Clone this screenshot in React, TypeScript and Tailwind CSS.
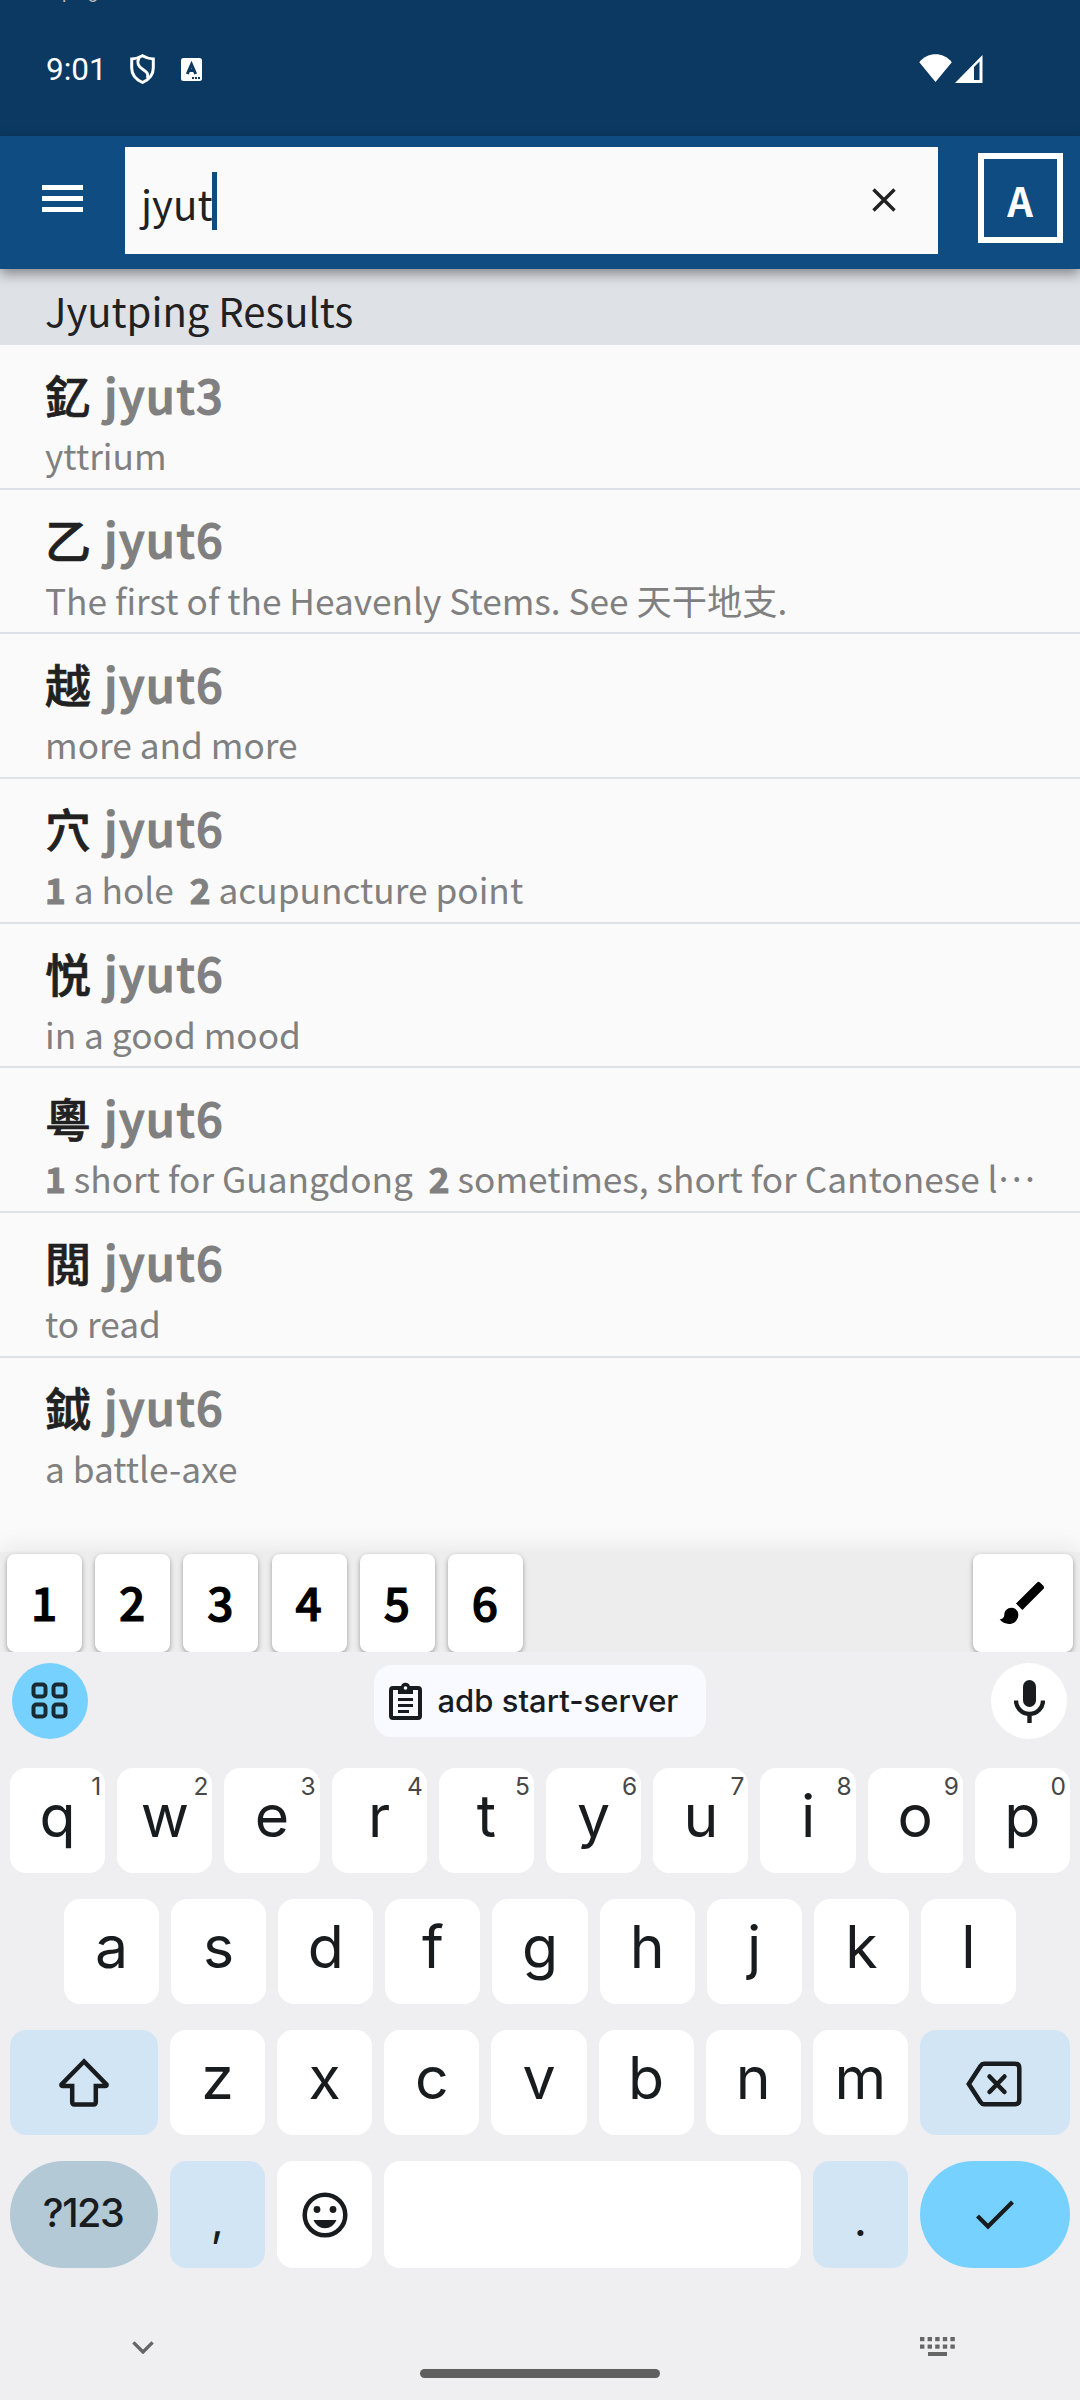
import React from "react";

const CJK = "font-['Noto_Sans_CJK_TC','Noto_Sans_CJK_SC',sans-serif]";
const SANS = "font-[Inter,sans-serif]";

type Sense = { n?: string; text: string; clipped?: boolean };
type Entry = { han: string; jp: string; senses: Sense[] };

const entries: Entry[] = [
  { han: "釔", jp: "jyut3", senses: [{ text: "yttrium" }] },
  { han: "乙", jp: "jyut6", senses: [{ text: "The first of the Heavenly Stems. See 天干地支." }] },
  { han: "越", jp: "jyut6", senses: [{ text: "more and more" }] },
  { han: "穴", jp: "jyut6", senses: [{ n: "1", text: "a hole" }, { n: "2", text: "acupuncture point" }] },
  { han: "悦", jp: "jyut6", senses: [{ text: "in a good mood" }] },
  {
    han: "粵",
    jp: "jyut6",
    senses: [
      { n: "1", text: "short for Guangdong" },
      { n: "2", text: "sometimes, short for Cantonese l", clipped: true },
    ],
  },
  { han: "閲", jp: "jyut6", senses: [{ text: "to read" }] },
  { han: "鉞", jp: "jyut6", senses: [{ text: "a battle-axe" }] },
];

function StatusBar() {
  return (
    <div className="relative flex h-[136px] shrink-0 items-start overflow-hidden bg-[#0c3961] text-white">
      <span className="absolute left-[62px] top-[-18px] font-[Roboto,sans-serif] text-[19px] leading-[20px] text-[#b8b8b8]">
        ping
      </span>
      <div className="ml-[46px] mt-[51px] w-[84px] font-[Roboto,sans-serif] text-[31.5px] leading-[38px]">9:01</div>
      <svg className="mt-[54px] h-[30px] w-[25px]" viewBox="0 0 25 30" fill="none" stroke="white" strokeWidth="3">
        <path d="M12.5 1.7 C9 3.8 5 4.8 1.7 5 V14 C1.7 21 7 26 12.5 28.5 C18 26 23.3 21 23.3 14 V5 C20 4.8 16 3.8 12.5 1.7Z" />
        <path d="M9 3.5 C6 10 9 13 13 15.5 C17 18 18.5 19.5 17.5 24" />
      </svg>
      <svg className="ml-[26px] mt-[58px] h-[23px] w-[21px]" viewBox="0 0 21 23">
        <rect width="21" height="23" rx="2.5" fill="white" />
        <path d="M6.3 16 L10.5 6.5 L14.7 16 M8 12.6 H13" fill="none" stroke="#0c3961" strokeWidth="3" />
        <path d="M11 19h2v2h-2z M14 19h2v2h-2z M17 19h2v2h-2z" fill="#0c3961" />
      </svg>
      <svg className="ml-[717px] mt-[54px] h-[29px] w-[64px]" viewBox="0 0 64 29" fill="white">
        <path d="M16.5 28 L0.3 8.2 C9 -2.3 24 -2.3 32.8 8.2Z" />
        <path fillRule="evenodd" d="M63.500 1 V29 H36Z M55 13 V26 H60.500 V7.500Z" />
      </svg>
    </div>
  );
}

function AppBar() {
  return (
    <div className="relative z-10 flex h-[133px] shrink-0 items-start bg-[#0f4c81] shadow-[0_5px_12px_rgba(0,0,0,0.4)]">
      <div className="ml-[42px] mt-[49px] flex w-[41px] flex-col gap-[6px]">
        <div className="h-[5px] bg-white" />
        <div className="h-[5px] bg-white" />
        <div className="h-[5px] bg-white" />
      </div>
      <div className="ml-[42px] mt-[11px] flex h-[107px] w-[813px] items-start bg-[#fafafa]">
        <span className={`${CJK} ml-[16px] mt-[26px] w-[71px] text-[40.2px] leading-[60px] text-[#212121]`}>jyut</span>
        <div className="mt-[25px] h-[58px] w-[5px] bg-[#0f4c81]" />
        <svg className="ml-auto mr-[42px] mt-[41px] h-[24px] w-[24px]" viewBox="0 0 24 24">
          <path d="M1.5 1.5 L22.5 22.5 M22.5 1.5 L1.5 22.5" stroke="#212121" strokeWidth="3.4" />
        </svg>
      </div>
      <div
        className={`${CJK} ml-[39.5px] mt-[17px] flex h-[90px] w-[85px] justify-center border-[6px] border-white pt-[9px] text-[40px] font-bold leading-[64px] text-white`}
      >
        A
      </div>
    </div>
  );
}

function Row({ entry, last }: { entry: Entry; last: boolean }) {
  return (
    <div
      className={`flex h-[144.67px] shrink-0 flex-col px-[45px] pt-[18.5px] ${last ? "" : "border-b-2 border-[#dee2e6]"}`}
    >
      <div className="flex gap-[13px] font-medium leading-[60px]">
        <span className="w-[46px] text-[46px] text-[#212121] [-webkit-text-stroke:0.7px_#212121]">{entry.han}</span>
        <span className="text-[47px] tracking-[1.3px] text-[#808080] [-webkit-text-stroke:1.2px_#808080]">{entry.jp}</span>
      </div>
      <div className="mt-[6.5px] whitespace-nowrap text-[35.25px] leading-[50px] text-[#808080]">
        {entry.senses.map((s, i) => (
          <React.Fragment key={i}>
            {i > 0 && "\u00a0 "}
            {s.n && <b className="font-bold [-webkit-text-stroke:1px_#808080]">{s.n} </b>}
            {s.text}
            {s.clipped && <span className="relative top-[-11px]">…</span>}
          </React.Fragment>
        ))}
      </div>
    </div>
  );
}

function ToneBar() {
  return (
    <div className="relative flex h-[100px] shrink-0 items-start justify-between bg-[#ededed] pl-[7px] pr-[7px] pt-[2px] shadow-[0_-4px_22px_rgba(0,0,0,0.08)]">
      <div className="flex gap-[13.2px]">
        {["1", "2", "3", "4", "5", "6"].map((n) => (
          <div
            key={n}
            className={`${CJK} h-[98px] w-[75px] rounded-[8px] bg-white pr-[1px] pt-[5px] text-center text-[46px] font-medium leading-[84px] text-black shadow-[0_2px_5px_rgba(0,0,0,0.35)] [-webkit-text-stroke:1.2px_black]`}
          >
            {n}
          </div>
        ))}
      </div>
      <div className="flex h-[98px] w-[100px] items-center justify-center rounded-[8px] bg-white shadow-[0_2px_5px_rgba(0,0,0,0.35)]">
        <svg className="h-[56px] w-[56px]" viewBox="0 0 24 24" fill="black">
          <path d="M7 14c-1.66 0-3 1.34-3 3 0 1.31-1.16 2-2 2 .92 1.22 2.49 2 4 2 2.21 0 4-1.79 4-4 0-1.66-1.34-3-3-3zm13.71-9.37l-1.34-1.34a.9959.9959 0 0 0-1.41 0L9 12.25 11.75 15l8.96-8.96c.39-.39.39-1.02 0-1.41z" />
        </svg>
      </div>
    </div>
  );
}

function Key({ label, hint }: { label: string; hint?: string }) {
  return (
    <div className="relative h-[105px] flex-1 rounded-[16px] bg-white text-center text-[59px] leading-[95px] text-[#191c1e]">
      {label}
      {hint && (
        <span className="absolute right-[4px] top-[3px] text-[24.500px] leading-[30px] text-[#474747]">{hint}</span>
      )}
    </div>
  );
}

function Keyboard() {
  return (
    <div className={`${SANS} relative flex h-[748px] shrink-0 flex-col bg-[#efeff2] text-[#191c1e]`}>
      <div className="mt-[11px] flex h-[76px] items-center justify-between pl-[12px] pr-[13px]">
        <div className="flex size-[76px] items-center justify-center rounded-full bg-[#77d1ff] pb-[1px] pr-[1px]">
          <svg className="h-[37px] w-[37px]" viewBox="0 0 37 37" fill="none" stroke="#1a2a33" strokeWidth="4">
            <rect x="2.5" y="2.5" width="12" height="12" rx="3" />
            <rect x="22.5" y="2.5" width="12" height="12" rx="3" />
            <rect x="2.5" y="22.5" width="12" height="12" rx="3" />
            <rect x="22.5" y="22.5" width="12" height="12" rx="3" />
          </svg>
        </div>
        <div className="flex h-[72px] w-[332px] items-center rounded-[18px] bg-[#f8faff] pl-[15px]">
          <svg className="h-[38px] w-[33px]" viewBox="0 0 33 38" fill="none">
            <rect x="2" y="6" width="29" height="30" rx="2" stroke="#191c1e" strokeWidth="4" />
            <path d="M9 4.5h3a4.6 4.6 0 0 1 9 0h3V12H9z" fill="#191c1e" />
            <circle cx="16.5" cy="6" r="1.8" fill="white" />
            <path d="M9 17.5h15M9 23.5h15M9 29.5h11" stroke="#191c1e" strokeWidth="3" />
          </svg>
          <span className="ml-[16px] whitespace-nowrap text-[31px] font-[450] leading-[44px]">adb start-server</span>
        </div>
        <div className="flex size-[76px] items-center justify-center rounded-full bg-white">
          <svg className="h-[43px] w-[31px]" viewBox="0 0 31 43" fill="none">
            <rect x="9" y="0" width="13" height="27" rx="6.5" fill="#191c1e" />
            <path d="M2 20.5a13.5 13.5 0 0 0 27 0M15.500 34v9" stroke="#191c1e" strokeWidth="4.400" />
          </svg>
        </div>
      </div>

      <div className="mt-[29px] flex flex-col gap-[26px] px-[10px]">
        <div className="flex gap-[12px]">
          {"qwertyuiop".split("").map((c, i) => (
            <Key key={c} label={c} hint={String((i + 1) % 10)} />
          ))}
        </div>
        <div className="flex gap-[12px] px-[54px]">
          {"asdfghjkl".split("").map((c) => (
            <Key key={c} label={c} />
          ))}
        </div>
        <div className="flex gap-[12px]">
          <div className="flex h-[105px] w-[148px] items-center justify-center rounded-[16px] bg-[#d2e5f5]">
            <svg className="h-[50px] w-[50px]" viewBox="0 0 50 50" fill="none">
              <path
                d="M25 3.500 L2.500 26.500 Q2 28 4 28 H13.200 V44 Q13.200 46.500 15.500 46.500 H34.500 Q36.800 46.500 36.800 44 V28 H46 Q48 28 47.500 26.500Z"
                stroke="#191c1e"
                strokeWidth="4.500"
              />
            </svg>
          </div>
          {"zxcvbnm".split("").map((c) => (
            <Key key={c} label={c} />
          ))}
          <div className="flex h-[105px] w-[150px] items-center justify-center rounded-[16px] bg-[#d2e5f5] pr-[1px]">
            <svg className="mt-[3px] h-[46px] w-[56px]" viewBox="0 0 56 46" fill="none" stroke="#191c1e" strokeWidth="4.500">
              <path d="M2.800 23 L14.500 5 Q16 2.800 18 2.800 H49 Q53.300 2.800 53.300 7 V39 Q53.300 43.200 49 43.200 H18 Q16 43.200 14.500 41Z" />
              <path d="M23.500 15.500 L38.500 31 M38.500 15.500 L23.500 31" strokeLinecap="round" />
            </svg>
          </div>
        </div>
        <div className="flex gap-[12px]">
          <div className="h-[107px] w-[148px] rounded-[54px] bg-[#b4c9d6] pr-[2px] text-center text-[39.5px] font-[450] leading-[104px] tracking-[-1.500px]">
            ?123
          </div>
          <div className="h-[107px] w-[95px] rounded-[16px] bg-[#d2e5f5] text-center text-[46px] leading-[116px]">,</div>
          <div className="flex h-[107px] w-[95px] items-center justify-center rounded-[16px] bg-white">
            <svg className="h-[46px] w-[46px]" viewBox="0 0 46 46">
              <circle cx="23" cy="23" r="20.300" fill="none" stroke="#191c1e" strokeWidth="4.500" />
              <circle cx="15" cy="17.500" r="3.400" fill="#191c1e" />
              <circle cx="31" cy="17.500" r="3.400" fill="#191c1e" />
              <path d="M11.500 28h23a12.200 12.200 0 0 1-23 0z" fill="#191c1e" />
            </svg>
          </div>
          <div className="h-[107px] flex-1 rounded-[16px] bg-white" />
          <div className="h-[107px] w-[95px] rounded-[16px] bg-[#d2e5f5] text-center text-[46px] leading-[116px]">.</div>
          <div className="flex h-[107px] w-[150px] items-center justify-center rounded-[54px] bg-[#77d1ff]">
            <svg className="h-[30px] w-[40px]" viewBox="0 0 40 30" fill="none">
              <path d="M2.500 16 L13 26.500 L37.500 2" stroke="#191c1e" strokeWidth="4.200" />
            </svg>
          </div>
        </div>
      </div>

      <div className="mt-[69px] flex h-[20px] items-start pl-[132px] pr-[125px]">
        <svg className="mt-[4px] h-[13px] w-[22px]" viewBox="0 0 22 13" fill="none">
          <path d="M1.400 1.400 L11 11 L20.600 1.400" stroke="#666" strokeWidth="3.400" />
        </svg>
        <svg className="ml-auto h-[20px] w-[35px]" viewBox="0 0 35 20" fill="#666">
          {[0, 7.6, 15.2, 22.8, 30.4].map((x) => (
            <React.Fragment key={x}>
              <rect x={x} y="0" width="4.400" height="4.200" />
              <rect x={x} y="7.500" width="4.400" height="4.200" />
            </React.Fragment>
          ))}
          <rect x="8" y="15" width="19" height="4" />
        </svg>
      </div>
      <div className="mx-auto mt-[12px] h-[9px] w-[240px] rounded-full bg-[#5f5f5f]" />
    </div>
  );
}

export default function App() {
  return (
    <div className="flex h-[2400px] w-[1080px] flex-col overflow-hidden bg-[#fafafa]">
      <StatusBar />
      <AppBar />
      <div className={`${CJK} flex h-[1283px] shrink-0 flex-col overflow-hidden`}>
        <div className="h-[76px] shrink-0 bg-[#dee1e6] pl-[45px] pt-[11px] text-[40px] leading-[60px] text-[#212121]">
          Jyutping Results
        </div>
        {entries.map((e, i) => (
          <Row key={e.han} entry={e} last={i === entries.length - 1} />
        ))}
      </div>
      <ToneBar />
      <Keyboard />
    </div>
  );
}
